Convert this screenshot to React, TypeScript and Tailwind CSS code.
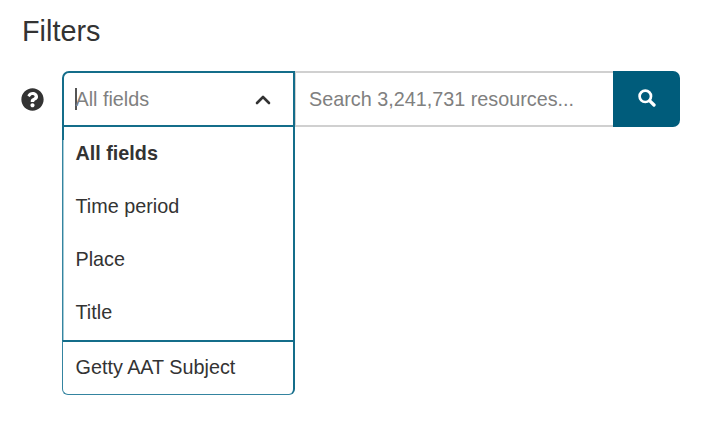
import React from "react";
import { FaQuestionCircle } from "react-icons/fa";

const fields = ["All fields", "Time period", "Place", "Title"];

export default function App() {
  return (
    <main className="h-[429px] w-[706px] overflow-hidden bg-white pl-[21px] pt-[12px] font-['Liberation_Sans',Arial,sans-serif] text-[19.8px] text-[#333]">
      <h1 className="h-[59px] pl-px text-[28.8px] leading-[38px]">Filters</h1>
      <div className="flex items-start">
        <button aria-label="Help" className="mt-[17px] mr-[18px] shrink-0">
          <FaQuestionCircle size={23} />
        </button>
        <div className="w-[233px] shrink-0">
          <div className="flex h-[56px] items-center rounded-tl-[7px] border-2 border-[#146d8a] pl-[11px] pr-[22px]">
            <span className="h-[22px] w-[2px] bg-[#555]" />
            <span className="-ml-[1.5px] grow leading-[24px] text-[#808080]">All fields</span>
            <svg className="mt-[2px]" width="16" height="10" viewBox="0 0 16 10" fill="none" stroke="#333" strokeWidth="2.6" strokeLinecap="round" strokeLinejoin="round">
              <path d="M2 8 L8 2 L14 8" />
            </svg>
          </div>
          <div className="flex h-[213px]">
            <div className="flex w-[2px] flex-col">
              <span className="h-[13px] bg-[#146d8a]" />
              <span className="grow border-l border-[#3484a0] bg-[#a5cbd6]" />
            </div>
            <ul className="grow border-r-2 border-[#146d8a]">
              {fields.map((field, i) => (
                <li key={field} className={`flex h-[53px] items-center pl-[11.5px] ${i === 0 ? "font-bold" : ""}`}>
                  {field}
                </li>
              ))}
            </ul>
          </div>
          <div className="flex h-[55px] items-center rounded-b-[6px] border-t-2 border-r-2 border-b border-l border-[#146d8a] border-b-[#3484a0] border-l-[#3484a0] pl-[12.5px]">
            Getty AAT Subject
          </div>
        </div>
        <div className="flex h-[56px] w-[318px] shrink-0 items-center border-y-2 border-l border-[#d0d0d0] pl-[13px] pt-px text-[#808080]">
          Search 3,241,731 resources...
        </div>
        <button aria-label="Search" className="flex h-[56px] w-[67px] shrink-0 items-center justify-center rounded-r-[7px] bg-[#005c7b] text-white">
          <svg className="-mt-[2px]" width="18" height="18" viewBox="0 0 18 18" fill="none" stroke="currentColor" strokeLinecap="round">
            <circle cx="7.3" cy="7.3" r="5.7" strokeWidth="2.7" />
            <path d="M11.8 11.8 L16 16" strokeWidth="3.3" />
          </svg>
        </button>
      </div>
    </main>
  );
}
